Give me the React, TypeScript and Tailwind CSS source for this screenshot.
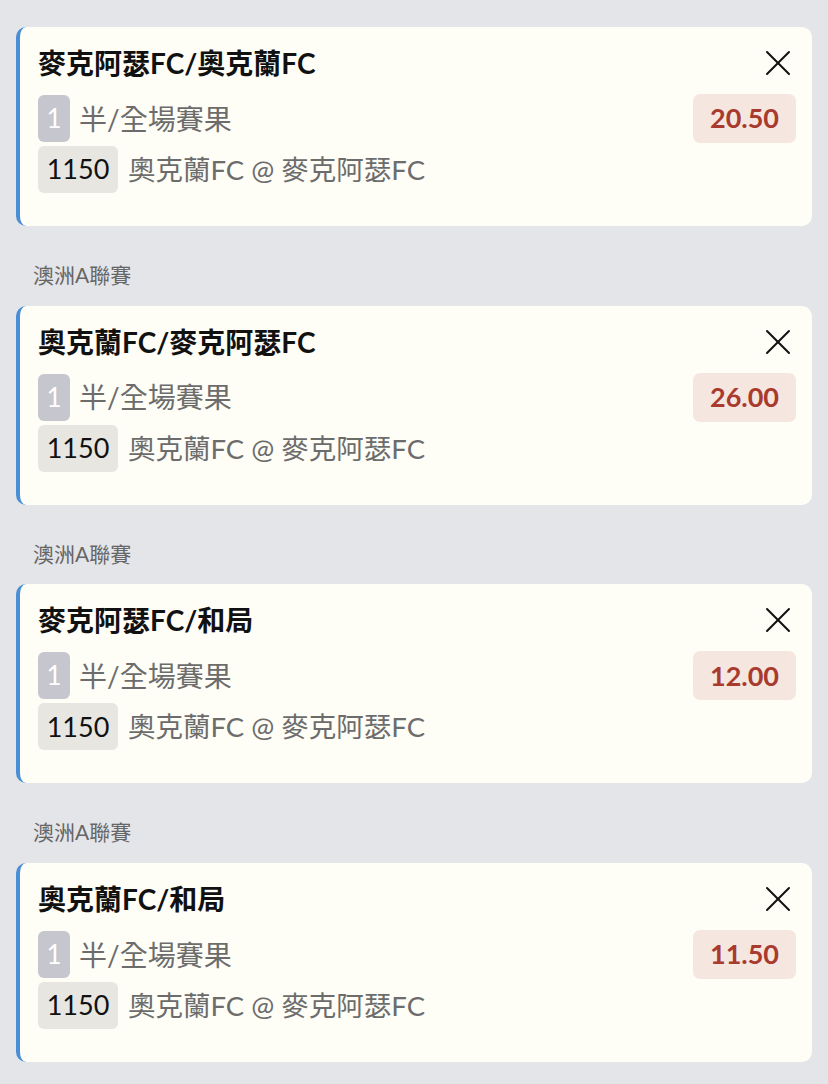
import React from "react";

type Bet = {
  selection: string;
  market: string;
  matchNo: string;
  match: string;
  odds: string;
};

const bets: Bet[] = [
  { selection: "麥克阿瑟FC/奧克蘭FC", market: "半/全場賽果", matchNo: "1150", match: "奧克蘭FC @ 麥克阿瑟FC", odds: "20.50" },
  { selection: "奧克蘭FC/麥克阿瑟FC", market: "半/全場賽果", matchNo: "1150", match: "奧克蘭FC @ 麥克阿瑟FC", odds: "26.00" },
  { selection: "麥克阿瑟FC/和局", market: "半/全場賽果", matchNo: "1150", match: "奧克蘭FC @ 麥克阿瑟FC", odds: "12.00" },
  { selection: "奧克蘭FC/和局", market: "半/全場賽果", matchNo: "1150", match: "奧克蘭FC @ 麥克阿瑟FC", odds: "11.50" },
];

const font = { fontFamily: '"Lato", "Noto Sans CJK TC", sans-serif' };

const CloseIcon = () => (
  <svg width="26" height="26" viewBox="0 0 26 26" fill="none" stroke="#111" strokeWidth="2" strokeLinecap="round">
    <line x1="2" y1="2" x2="24" y2="24" />
    <line x1="24" y1="2" x2="2" y2="24" />
  </svg>
);

const BetCard = ({ selection, market, matchNo, match, odds }: Bet) => (
  <div className="rounded-[10px] border-l-4 border-[#4a8fd6] bg-[#fefdf6] pl-[18px] pr-[16px] pt-[18px] pb-[33px]">
    <div className="flex h-[36px] items-center justify-between">
      <div className="text-[28px] font-bold leading-[36px] text-[#111]">{selection}</div>
      <div className="mr-[5px]">
        <CloseIcon />
      </div>
    </div>
    <div className="mt-[13px] flex items-center justify-between">
      <div className="flex items-center">
        <span className="flex h-[47px] w-[32px] items-center justify-center rounded-[6px] bg-[#c6c6ce] text-[26px] text-white">1</span>
        <span className="ml-[9px] text-[28px] text-[#6c6c6c]">{market}</span>
      </div>
      <span className="flex h-[49px] w-[103px] items-center justify-center rounded-[7px] bg-[#f6e6e0] text-[27px] font-bold text-[#a83a2e]">
        {odds}
      </span>
    </div>
    <div className="mt-[3px] flex items-center">
      <span className="flex h-[47px] w-[80px] items-center justify-center rounded-[6px] bg-[#e7e6e1] text-[27px] text-[#111]">{matchNo}</span>
      <span className="ml-[10px] text-[27.5px] text-[#6c6c6c]">{match}</span>
    </div>
  </div>
);

export default function App() {
  return (
    <div className="min-h-[1084px] bg-[#e4e5e9] px-[16px] pt-[27px] pb-[23px]" style={font}>
      {bets.map((b, i) => (
        <div key={i}>
          {i > 0 && (
            <div className="pl-[17px] pt-[36px] pb-[18.7px] text-[21px] leading-[25px] text-[#666]">澳洲A聯賽</div>
          )}
          <BetCard {...b} />
        </div>
      ))}
    </div>
  );
}
